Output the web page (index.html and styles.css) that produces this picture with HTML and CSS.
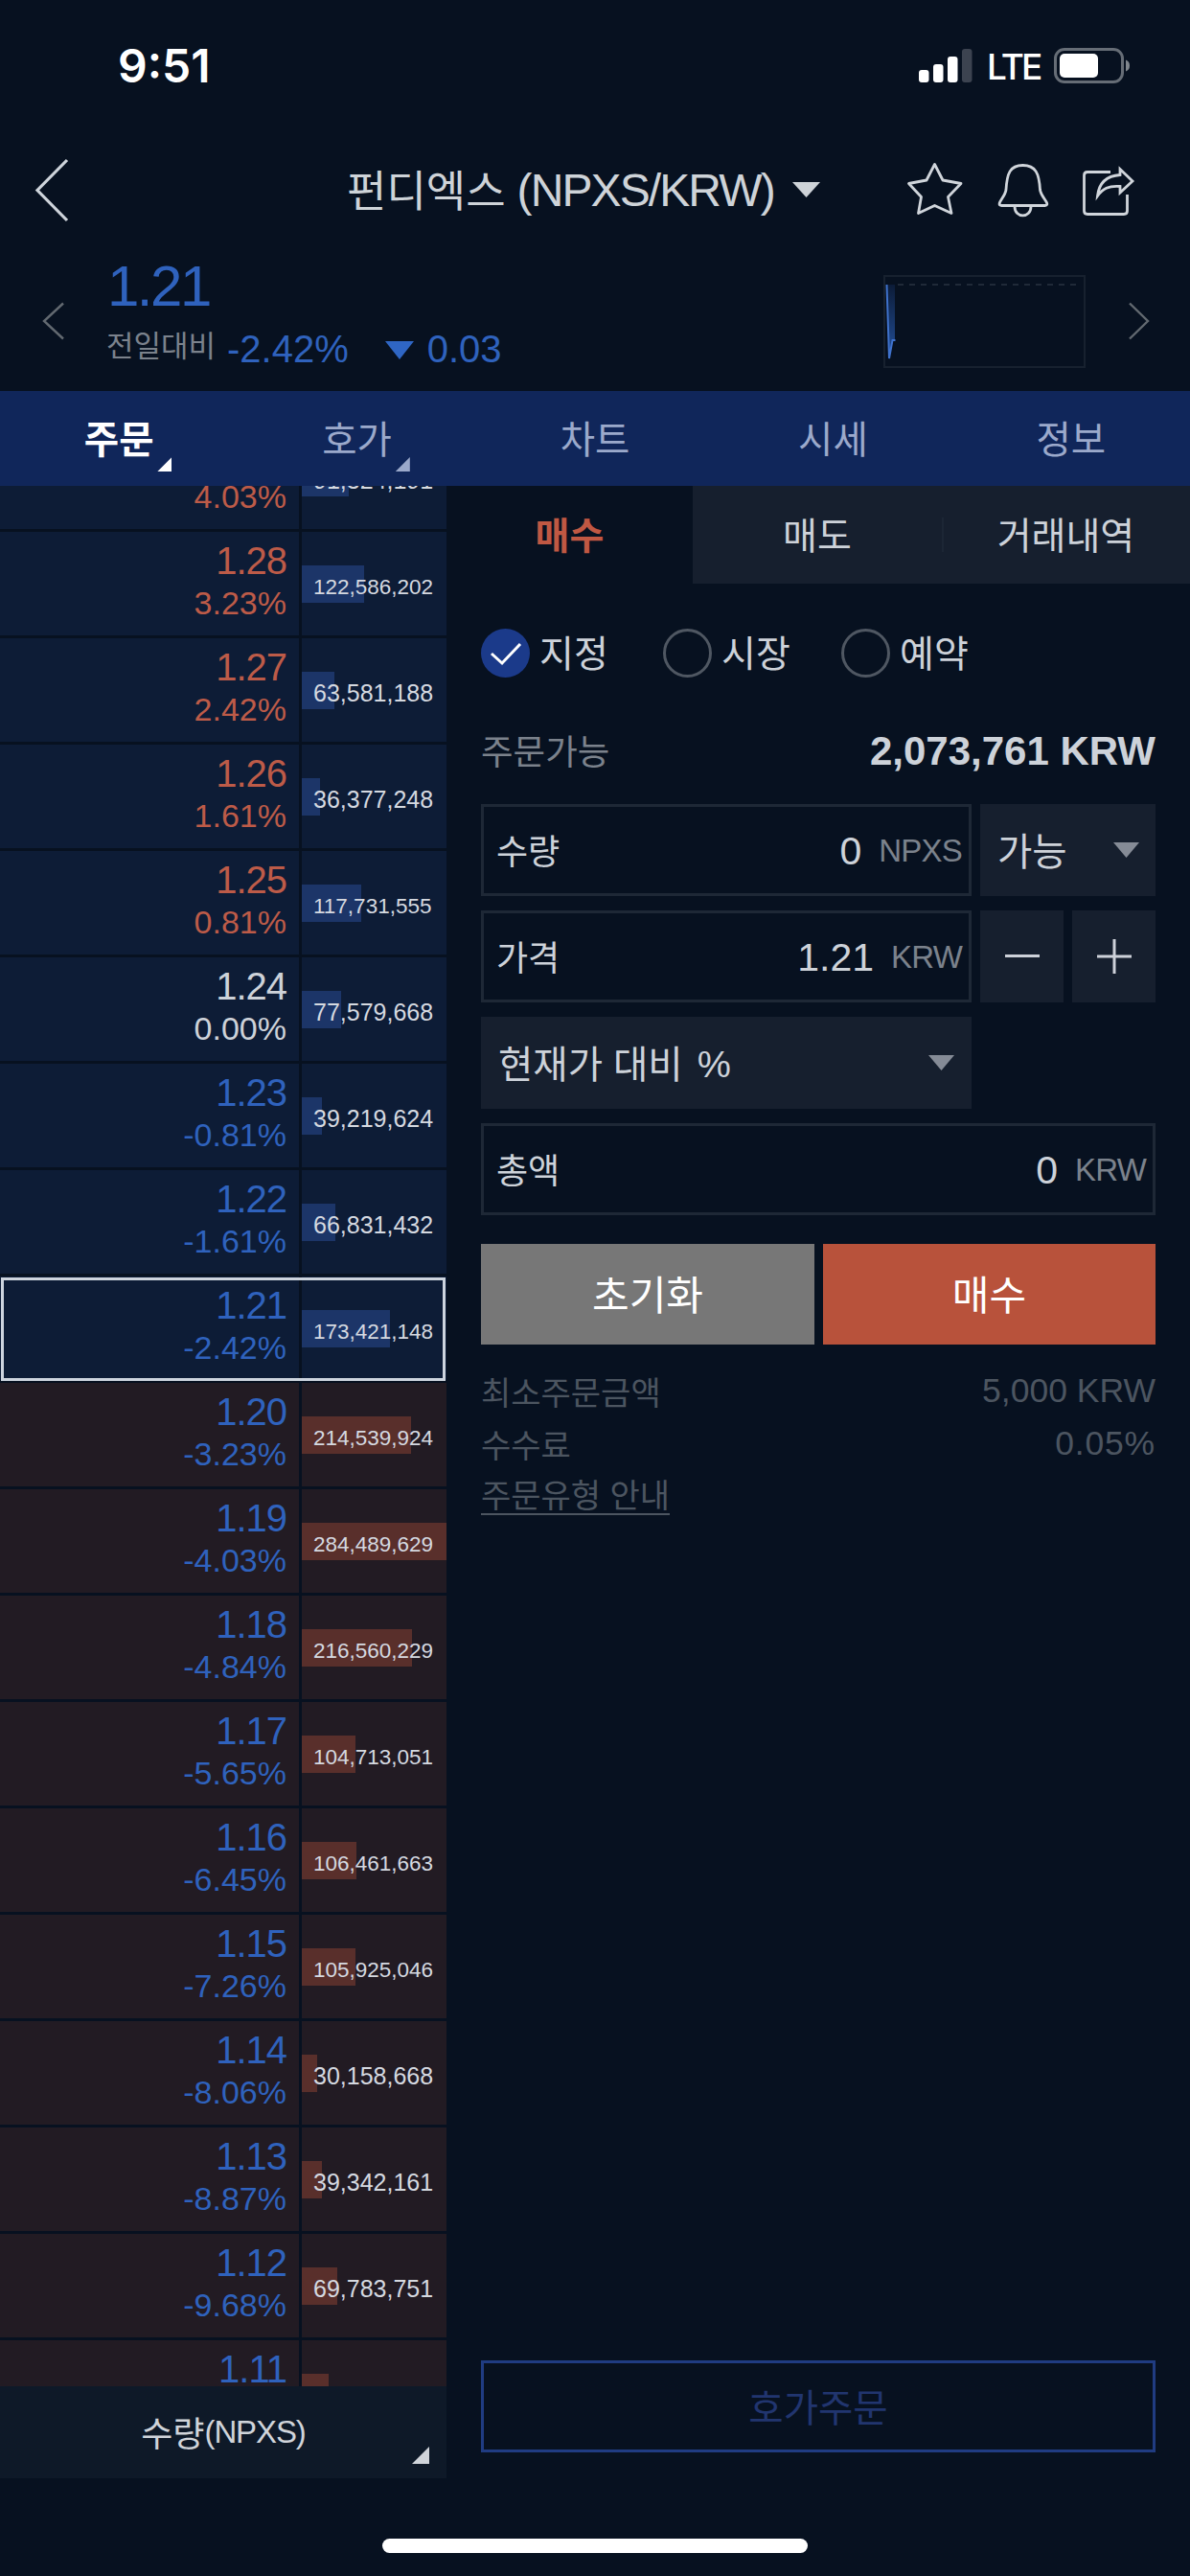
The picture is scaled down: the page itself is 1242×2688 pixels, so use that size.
FILE: index.html
```html
<!DOCTYPE html>
<html lang="ko">
<head>
<meta charset="utf-8">
<title>펀디엑스 (NPXS/KRW)</title>
<link rel="stylesheet" href="styles.css">
</head>
<body>
<div class="app">
  <header class="status">
    <span class="clock">9:51</span>
    <svg class="signal" width="56" height="38" viewBox="0 0 56 38"><g fill="#fff"><rect x="0" y="23" width="10.5" height="13" rx="3"/><rect x="15" y="17" width="10.5" height="19" rx="3"/><rect x="30" y="9" width="10.5" height="27" rx="3"/></g><rect x="45" y="1" width="10.5" height="35" rx="3" fill="#3c4350"/></svg>
    <span class="lte">LTE</span>
    <svg class="battery" width="80" height="38" viewBox="0 0 80 38"><rect x="1.5" y="1.5" width="70" height="34" rx="9.5" fill="none" stroke="#666d76" stroke-width="3"/><rect x="6" y="6" width="40" height="25" rx="5" fill="#fff"/><path d="M75 12.500q4 1.500 4 6t-4 6z" fill="#80868d"/></svg>
  </header>

  <nav class="titlebar">
    <svg class="back" width="36" height="68" viewBox="0 0 36 68"><path d="M34 3L3 34.500L34 66" fill="none" stroke="#ced4db" stroke-width="3.200"/></svg>
    <h1 class="title"><span class="ko">펀디엑스</span><span class="pair">(NPXS/KRW)</span><svg class="caret" width="29" height="16" viewBox="0 0 29 16"><path d="M0 0h29L14.500 16z" fill="#ced3d8"/></svg></h1>
    <svg class="icons" width="240" height="60" viewBox="944 167 240 60" fill="none" stroke="#d0d5db" stroke-width="2.800" stroke-linejoin="round">
      <path d="M973.500 170.500L982 187L1001 190.500L987.500 204.500L991 221.500L973.500 213.500L956.500 221.500L959.500 204.500L946.500 190.500L965 187Z"/>
      <path d="M1043 213.500C1037 212 1047 205 1048 197C1049 180 1052 171.500 1065.500 171.500C1079 171.500 1082.500 180 1083.500 197C1084.500 205 1095 212 1089 213.500Z"/>
      <path d="M1057 214.500C1057 227 1074 227 1074 214.500"/>
      <path d="M1157 178.500H1133Q1129.500 178.500 1129.500 182V219Q1129.500 222.500 1133 222.500H1171Q1174.500 222.500 1174.500 219V202"/>
      <path stroke-linejoin="miter" d="M1167 175.500L1180 188L1167 200V193.500C1155 192.500 1149 196 1143.500 203.500C1145 190 1153 182.500 1167 181.500Z"/>
    </svg>
  </nav>

  <section class="ticker">
    <svg class="prev" width="24" height="40" viewBox="0 0 24 40"><path d="M22 1.500L2 20L22 38.500" fill="none" stroke="#626970" stroke-width="2.400"/></svg>
    <div class="quote">
      <div class="last">1.21</div>
      <div class="change"><span class="label">전일대비</span><span class="rate">-2.42%</span><svg width="30" height="19" viewBox="0 0 30 19"><path d="M0 0h30L15 19z" fill="#2f66c4"/></svg><span class="diff">0.03</span></div>
    </div>
    <svg class="spark" width="212" height="97" viewBox="0 0 212 97">
      <defs><linearGradient id="fade" x1="0" y1="0" x2="0" y2="1"><stop offset="0" stop-color="#0c1c38"/><stop offset="1" stop-color="#23509a"/></linearGradient></defs>
      <rect x="1" y="1" width="209" height="95" fill="none" stroke="#17212f" stroke-width="2"/>
      <path d="M15 10H204" stroke="#202a38" stroke-width="2" stroke-dasharray="6 6"/>
      <path d="M3 10H12V68H10L6 87Z" fill="url(#fade)"/>
      <path d="M3.500 10L6 87L9.500 68H12.500" fill="none" stroke="#3f72cc" stroke-width="2"/>
    </svg>
    <svg class="next" width="24" height="40" viewBox="0 0 24 40"><path d="M2 1.500L21 20L2 38.500" fill="none" stroke="#626970" stroke-width="2.400"/></svg>
  </section>

  <nav class="tabs">
    <div class="tab on"><span>주문</span><i class="corner"></i></div>
    <div class="tab"><span>호가</span><i class="corner"></i></div>
    <div class="tab"><span>차트</span></div>
    <div class="tab"><span>시세</span></div>
    <div class="tab"><span>정보</span></div>
  </nav>

  <main class="main">
    <aside class="book">
      <div class="rows" id="rows"></div>
      <div class="bookfoot"><span class="ko">수량</span><span class="coin">(NPXS)</span><i class="corner"></i></div>
    </aside>

    <section class="order">
      <div class="subtabs"><div class="sub on">매수</div><div class="sub">매도</div><div class="sub last-sub">거래내역</div></div>
      <div class="form">
        <div class="radios">
          <div class="radio"><svg width="51" height="51" viewBox="0 0 51 51"><circle cx="25.500" cy="25.500" r="25.500" fill="#1b3a8a"/><path d="M11 26L22 36L41 16" fill="none" stroke="#fff" stroke-width="3"/></svg><span>지정</span></div>
          <div class="radio"><i class="ring"></i><span>시장</span></div>
          <div class="radio"><i class="ring"></i><span>예약</span></div>
        </div>
        <div class="avail"><span>주문가능</span><b>2,073,761 KRW</b></div>
        <div class="grid">
          <div class="field"><span class="name">수량</span><span class="num">0</span><span class="unit">NPXS</span></div>
          <div class="select wide2"><span>가능</span><i class="down"></i></div>
          <div class="field"><span class="name">가격</span><span class="num">1.21</span><span class="unit">KRW</span></div>
          <div class="step"><svg width="36" height="36" viewBox="0 0 36 36"><path d="M0 17.500h36" stroke="#cdd1d9" stroke-width="3"/></svg></div>
          <div class="step"><svg width="36" height="36" viewBox="0 0 36 36"><path d="M0 18h36M18 0v36" stroke="#cdd1d9" stroke-width="3"/></svg></div>
          <div class="select pctbox"><span>현재가 대비</span><span class="sign">%</span><i class="down"></i></div>
          <div class="field total"><span class="name">총액</span><span class="num">0</span><span class="unit">KRW</span></div>
        </div>
        <div class="actions"><div class="btn reset">초기화</div><div class="btn buy">매수</div></div>
        <div class="notes">
          <div class="note"><span>최소주문금액</span><span class="val">5,000 KRW</span></div>
          <div class="note"><span>수수료</span><span class="val fee">0.05%</span></div>
          <div class="note"><span class="link">주문유형 안내</span></div>
        </div>
        <div class="bookorder">호가주문</div>
      </div>
    </section>
  </main>
  <footer class="home"><i></i></footer>
</div>
<script src="book.js"></script>
</body>
</html>
```
FILE: styles.css
```css
* { box-sizing: border-box; }
body { margin: 0; background: #071120; font-family: "Liberation Sans", "Noto Sans CJK KR", sans-serif; color: #cdd2d9; }
.app { width: 1242px; height: 2688px; display: flex; flex-direction: column; overflow: hidden; white-space: nowrap; }
svg { display: block; flex: none; }

.status { height: 137px; display: flex; align-items: center; color: #fff; font-family: Inter, sans-serif; padding: 0 62px 0 123px; }
.clock { font-size: 48px; font-weight: 600; margin-right: auto; }
.lte { font-size: 37px; font-weight: 500; width: 55px; margin: 2px 15px 0 15px; letter-spacing: -2.800px; }

.titlebar { height: 122px; display: flex; align-items: center; padding: 0 56px 0 36px; }
.title { margin: 0 auto 0 290px; display: flex; align-items: center; font-weight: 400; font-size: 48px; color: #ced3d8; }
.title .ko { font-size: 45px; margin-top: -3px; }
.pair { margin-left: 12px; letter-spacing: -1.900px; }
.caret { margin-left: 19px; }

.ticker { height: 149px; display: flex; align-items: center; padding-left: 44px; }
.prev, .next { margin-top: 3px; }
.quote { margin-left: 43px; width: 811px; color: #2f62bd; }
.last { font-size: 60px; line-height: 64px; margin-top: -9px; letter-spacing: -2.500px; padding: 0 0 5px 1px; }
.change { display: flex; align-items: center; font-size: 40px; line-height: 56px; }
.change .label { font-size: 31px; color: #7b828c; width: 126px; margin-top: -3px; }
.change svg { margin: 4px 14px 0 38px; }
.spark { margin: 4px 43px 0 0; }

.tabs { height: 99px; display: grid; grid-template-columns: repeat(5, 1fr); background: #10265a; }
.tab { position: relative; display: flex; align-items: center; justify-content: center; font-size: 39.500px; color: #9ba9cb; padding-bottom: 5px; }
.tab.on { font-weight: 700; color: #fff; }
.corner { position: absolute; width: 15px; height: 15px; background: currentColor; clip-path: polygon(100% 0, 100% 100%, 0 100%); }
.tab .corner { right: 69px; bottom: 15px; }

.main { display: flex; height: 2079px; }
.book { width: 466px; display: flex; flex-direction: column; }
.rows { height: 1983px; overflow: hidden; display: flex; flex-direction: column; }
.row { flex: none; height: 111px; padding-bottom: 3px; display: grid; grid-template-columns: 312px 151px; column-gap: 3px; position: relative; }
.row:first-child { margin-top: -63px; }
.cell { background: #0d1c36; overflow: hidden; }
.bid .cell { background: #221b23; }
.quoted { text-align: right; padding: 7px 13px 0 0; color: #2f62bd; }
.up .quoted { color: #bd5b48; }
.flat .quoted { color: #cdd2d9; }
.price { font-size: 40px; line-height: 46px; height: 46px; letter-spacing: -1px; }
.pct { font-size: 34px; line-height: 43px; height: 43px; }
.depth { padding-top: 35px; display: grid; }
.bar { grid-area: 1 / 1; height: 39px; background: #1c3568; }
.bid .bar { background: #592f2b; }
.qty { grid-area: 1 / 1; padding: 8px 0 0 12px; height: 39px; line-height: 28px; font-size: 25px; color: #d5d9e0; }
.qty.long { font-size: 22.500px; padding-top: 9px; }
.current::after { content: ""; position: absolute; inset: 1px 1px 2px 1px; border: 3px solid #cdd4de; }
.bookfoot { position: relative; height: 96px; background: #0e1928; display: flex; align-items: center; justify-content: center; font-size: 33px; color: #d0d4da; }
.bookfoot .ko { font-size: 36px; margin-top: -3px; }
.coin { letter-spacing: -1.100px; }
.bookfoot .corner { right: 18px; bottom: 15px; width: 18px; height: 18px; }

.order { width: 776px; display: flex; flex-direction: column; }
.subtabs { height: 102px; display: grid; grid-template-columns: 257px 260px 259px; font-size: 39px; }
.sub { display: flex; align-items: center; justify-content: center; background: #161f2e; position: relative; padding-bottom: 4px; }
.sub.on { background: none; color: #c05843; font-weight: 700; }
.last-sub::before { content: ""; position: absolute; left: 0; top: 33px; width: 2px; height: 36px; background: #1c2635; }
.form { flex: 1; display: flex; flex-direction: column; padding: 47px 36px 27px; }
.radios { display: flex; height: 51px; }
.radio { display: flex; align-items: center; gap: 10px; width: 190px; font-size: 39px; }
.radio + .radio { width: 186px; }
.radio span { margin-top: -5px; }
.ring { width: 51px; height: 51px; border: 3px solid #4f5762; border-radius: 50%; }
.avail { margin-top: 43px; height: 68px; display: flex; align-items: center; justify-content: space-between; font-size: 36.500px; color: #7b828c; }
.avail span { margin-top: -4px; }
.avail b { font-size: 42px; color: #cdd2d9; }
.grid { margin-top: 21px; display: grid; grid-template-columns: 512px 87px 87px; grid-auto-rows: 96px; gap: 15px 9px; }
.field { border: 3px solid #1e2836; display: flex; align-items: center; padding: 0 7px 0 13px; }
.field .name { font-size: 36px; margin: -3px auto 0 0; }
.num { font-size: 41px; margin-top: 3px; }
.unit { font-size: 33px; margin: 1px 0 0 18px; color: #7b828c; letter-spacing: -.800px; }
.select, .step { background: #161f2e; display: flex; align-items: center; font-size: 39.500px; }
.select { padding: 0 18px; }
.select span { margin-top: -3px; }
.wide2 { grid-column: span 2; padding-right: 17px; }
.down { margin-left: auto; width: 27px; height: 16px; background: #858b96; clip-path: polygon(0 0, 100% 0, 50% 100%); }
.select .sign { margin: 2px 0 0 15px; }
.pctbox { grid-column: 1; }
.step { justify-content: center; }
.total { grid-column: 1 / -1; }
.actions { margin-top: 30px; display: grid; grid-template-columns: 348px 347px; gap: 9px; height: 105px; }
.btn { display: flex; align-items: center; justify-content: center; font-size: 42px; color: #fff; padding-bottom: 4px; }
.reset { background: #777; }
.buy { background: #b8523b; }
.notes { margin-top: 21px; font-size: 34px; color: #4c5560; }
.note { display: flex; justify-content: space-between; align-items: center; height: 55px; }
.val { font-size: 35.500px; }
.fee { letter-spacing: .800px; }
.link { border-bottom: 2px solid #4c5560; line-height: 36px; margin-top: 1px; }
.bookorder { margin-top: auto; height: 96px; border: 3px solid #203c82; display: flex; align-items: center; justify-content: center; font-size: 39.500px; color: #21356f; padding-bottom: 4px; }

.home { height: 102px; display: flex; justify-content: center; padding-top: 63px; }
.home i { width: 444px; height: 15px; border-radius: 8px; background: #fff; }
```
FILE: book.js
```js
// price, change, quantity, bar width in percent of the column
const levels = [
  ["", "4.03%", "91,324,191", 32.4],
  ["1.28", "3.23%", "122,586,202"],
  ["1.27", "2.42%", "63,581,188"],
  ["1.26", "1.61%", "36,377,248"],
  ["1.25", "0.81%", "117,731,555"],
  ["1.24", "0.00%", "77,579,668"],
  ["1.23", "-0.81%", "39,219,624"],
  ["1.22", "-1.61%", "66,831,432"],
  ["1.21", "-2.42%", "173,421,148"],
  ["1.20", "-3.23%", "214,539,924"],
  ["1.19", "-4.03%", "284,489,629"],
  ["1.18", "-4.84%", "216,560,229"],
  ["1.17", "-5.65%", "104,713,051"],
  ["1.16", "-6.45%", "106,461,663"],
  ["1.15", "-7.26%", "105,925,046"],
  ["1.14", "-8.06%", "30,158,668"],
  ["1.13", "-8.87%", "39,342,161"],
  ["1.12", "-9.68%", "69,783,751"],
  ["1.11", "", "", 18.4]
];
const max = 284489629;
let side = "ask";
document.getElementById("rows").innerHTML = levels.map(([price, pct, qty, share]) => {
  if (price === "1.20") side = "bid";
  const change = parseFloat(pct || "-1");
  const trend = change > 0 ? "up" : change === 0 ? "flat" : "fall";
  const width = share || Number(qty.replace(/,/g, "")) / max * 100;
  return `<div class="row ${side} ${trend}${price === "1.21" ? " current" : ""}">
    <div class="cell quoted"><div class="price">${price}</div><div class="pct">${pct}</div></div>
    <div class="cell depth"><div class="bar" style="width:${width}%"></div><div class="qty${qty.length > 10 ? " long" : ""}">${qty}</div></div>
  </div>`;
}).join("");
```
